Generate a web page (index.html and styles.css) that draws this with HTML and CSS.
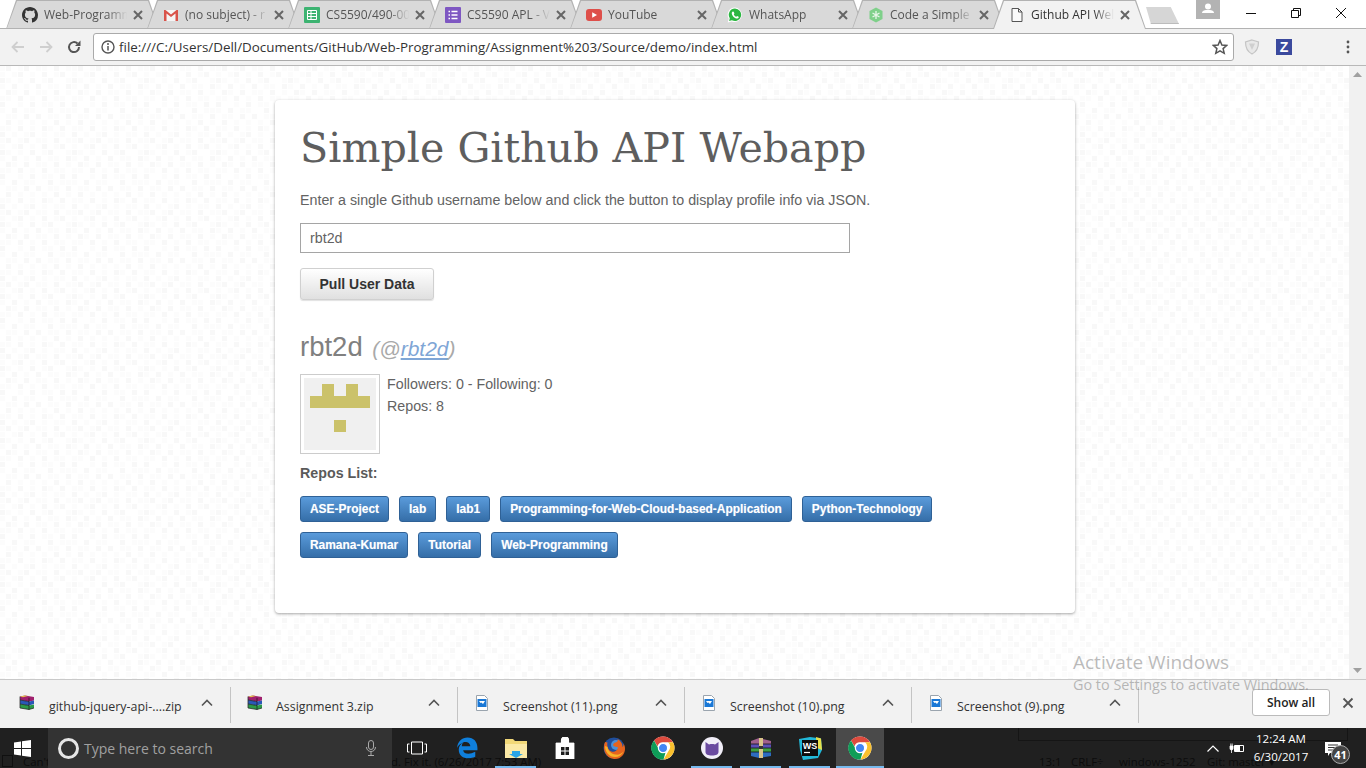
FILE: index.html
```html
<!DOCTYPE html>
<html lang="en">
<head>
<meta charset="utf-8">
<title>Github API Webapp</title>
<link rel="stylesheet" href="styles.css">
</head>
<body>
<svg class="defs" width="0" height="0" aria-hidden="true">
  <symbol id="chrome" viewBox="0 0 24 24">
    <circle cx="12" cy="12" r="11.500" fill="#fff"/>
    <path d="M12 .5a11.500 11.500 0 0 1 10 5.800H12a5.700 5.700 0 0 0-5.500 4L3 4.600A11.500 11.500 0 0 1 12 .5z" fill="#dd4b3e"/>
    <path d="M22 6.300A11.500 11.500 0 0 1 12.500 23.500l5-8.600a5.700 5.700 0 0 0-.5-8.600z" fill="#fbc02d"/>
    <path d="M12.500 23.500A11.500 11.500 0 0 1 3 4.600l5 8.800a5.700 5.700 0 0 0 6.500 3z" fill="#0f9d58"/>
    <circle cx="12" cy="12" r="4.600" fill="#4285f4" stroke="#fff" stroke-width="1.200"/>
  </symbol>
  <symbol id="rar" viewBox="0 0 16 16">
    <path d="M1 1.500 6 .5l9 1.500v3.500L10 6.500 1 5z" fill="#a0206e"/>
    <path d="M1 1.500 6 .5l3 .5-5 1.200z" fill="#e3c14a"/>
    <path d="M1 5l9 1.500 5-1V9l-5 1.500L1 9z" fill="#2a58b8"/>
    <path d="M1 9l9 1.500 5-1V13l-5 1.500L1 13z" fill="#2c9a48"/>
    <path d="M1 5l9 1.500M1 9l9 1.500M1 13l9 1.500 5-1.500M10 2.800v11.700" fill="none" stroke="#1a1a1a" stroke-width=".7"/>
    <path d="M1 1.500V13" stroke="#333" stroke-width=".8"/>
  </symbol>
  <symbol id="png" viewBox="0 0 12 16">
    <path d="M.5.5h8l3 3v12H.5z" fill="#fff" stroke="#9aa4ae"/>
    <rect x="1.500" y="4" width="9" height="8" fill="#1a78d6"/>
    <path d="M3 6h6L7 9 5.500 7.500 4.500 8z" fill="#fff"/>
  </symbol>
  <symbol id="x" viewBox="0 0 10 10">
    <path d="M1 1l8 8M9 1 1 9" stroke="#666" stroke-width="2" fill="none"/>
  </symbol>
  <symbol id="chevron" viewBox="0 0 12 8">
    <path d="M1 6.500 6 1.500l5 5" fill="none" stroke="#555" stroke-width="1.600"/>
  </symbol>
</svg>

<header class="tabstrip">
  <div class="tab">
    <svg class="fav" viewBox="0 0 16 16"><path fill="#333" d="M8 0C3.580 0 0 3.580 0 8c0 3.540 2.290 6.530 5.470 7.590.4.070.55-.17.55-.38 0-.19-.01-.82-.01-1.490-2.010.37-2.530-.49-2.690-.94-.09-.23-.48-.94-.82-1.130-.28-.15-.68-.52-.01-.53.63-.01 1.080.58 1.230.82.72 1.210 1.870.87 2.330.66.070-.52.28-.87.51-1.070-1.780-.2-3.640-.89-3.640-3.950 0-.87.31-1.590.82-2.150-.08-.2-.36-1.020.08-2.120 0 0 .67-.21 2.200.82.64-.18 1.320-.27 2-.27.68 0 1.360.09 2 .27 1.530-1.040 2.200-.82 2.200-.82.44 1.100.16 1.920.08 2.120.51.56.82 1.270.82 2.150 0 3.070-1.870 3.750-3.650 3.950.29.25.54.73.54 1.480 0 1.070-.01 1.930-.01 2.200 0 .21.15.46.55.38A8.013 8.013 0 0 0 16 8c0-4.420-3.580-8-8-8z"/></svg>
    <span class="tab-label">Web-Programm</span><svg class="tab-x"><use href="#x"/></svg>
  </div>
  <div class="tab">
    <svg class="fav" viewBox="0 0 16 16"><path d="M1 3h14v11H1z" fill="#f5f5f5"/><path d="M1 3v11h2.500V6.500L8 10l4.500-3.500V14H15V3h-1.500L8 7.500 2.500 3z" fill="#d9534a"/></svg>
    <span class="tab-label">(no subject) - r</span><svg class="tab-x"><use href="#x"/></svg>
  </div>
  <div class="tab">
    <svg class="fav" viewBox="0 0 16 16"><rect width="16" height="16" rx="1" fill="#3cb371"/><path d="M3.500 3.500h9v9h-9zM3.500 6.500h9M3.500 9.500h9M7 3.500v9" fill="none" stroke="#fff"/></svg>
    <span class="tab-label">CS5590/490-00</span><svg class="tab-x"><use href="#x"/></svg>
  </div>
  <div class="tab">
    <svg class="fav" viewBox="0 0 16 16"><rect width="16" height="16" rx="1" fill="#7e57c2"/><path d="M3.500 4.500h1.500M6.500 4.500h6M3.500 8h1.500M6.500 8h6M3.500 11.500h1.500M6.500 11.500h6" stroke="#fff" stroke-width="1.500"/></svg>
    <span class="tab-label">CS5590 APL - V</span><svg class="tab-x"><use href="#x"/></svg>
  </div>
  <div class="tab">
    <svg class="fav" viewBox="0 0 16 16"><rect y="2" width="16" height="12" rx="3" fill="#de4f4a"/><path d="M6.200 5.200v5.600L11 8z" fill="#fff"/></svg>
    <span class="tab-label">YouTube</span><svg class="tab-x"><use href="#x"/></svg>
  </div>
  <div class="tab">
    <svg class="fav" viewBox="0 0 16 16"><path d="M8 .5a7.300 7.300 0 0 0-6.200 11.200L.7 15.500l3.900-1A7.300 7.300 0 1 0 8 .5z" fill="#fff"/><path d="M8 1.600a6.200 6.200 0 0 0-5.200 9.600l-.7 2.700 2.800-.7A6.200 6.200 0 1 0 8 1.600z" fill="#2cb742"/><path d="M5.800 4.500c-.9.500-1.300 1.500-.8 2.900.7 1.800 2.200 3.400 4 4 1.200.4 2.300 0 2.700-1l-.1-.6-1.500-.8-.8.800c-1-.4-2-1.400-2.500-2.400l.6-.8-.7-1.800z" fill="#fff"/></svg>
    <span class="tab-label">WhatsApp</span><svg class="tab-x"><use href="#x"/></svg>
  </div>
  <div class="tab">
    <svg class="fav" viewBox="0 0 16 16"><path d="M8 .5 14.500 4v8L8 15.500 1.500 12V4z" fill="#7fd08a"/><path d="M8 4v8M4.500 6l7 4M11.500 6l-7 4" stroke="#e8f6ea" stroke-width="1.300"/></svg>
    <span class="tab-label">Code a Simple</span><svg class="tab-x"><use href="#x"/></svg>
  </div>
  <div class="tab tab-active">
    <svg class="fav" viewBox="0 0 16 16"><path d="M3 1.500h6.500l3.500 3.500v9.500H3zM9.500 1.500V5H13" fill="#fafafa" stroke="#555"/></svg>
    <span class="tab-label">Github API Wel</span><svg class="tab-x"><use href="#x"/></svg>
  </div>
  <div class="newtab"></div>
  <div class="strip-spacer"></div>
  <div class="profile">
    <svg viewBox="0 0 24 19" width="24" height="19"><circle cx="12" cy="6.500" r="3" fill="#fff"/><path d="M6 13c0-2.500 3-3 6-3s6 .5 6 3z" fill="#fff"/></svg>
  </div>
  <div class="winctl">
    <svg viewBox="0 0 12 12" width="12" height="12"><path d="M1 6.500h10" stroke="#111"/></svg>
  </div>
  <div class="winctl">
    <svg viewBox="0 0 12 12" width="12" height="12"><path d="M1.500 3.500h7v7h-7zM3.500 3.500v-2h7v7h-2" fill="none" stroke="#111"/></svg>
  </div>
  <div class="winctl">
    <svg viewBox="0 0 12 12" width="12" height="12"><path d="M1 1l10 10M11 1 1 11" stroke="#111" fill="none"/></svg>
  </div>
</header>

<nav class="toolbar">
  <svg class="navicon" viewBox="0 0 16 16"><path d="M14 8H3M7.500 3 2.500 8l5 5" fill="none" stroke="#cfcfcf" stroke-width="1.800"/></svg>
  <svg class="navicon" viewBox="0 0 16 16"><path d="M2 8h11M8.500 3l5 5-5 5" fill="none" stroke="#cfcfcf" stroke-width="1.800"/></svg>
  <svg class="navicon" viewBox="0 0 16 16"><path d="M13 8a5 5 0 1 1-1.500-3.500" fill="none" stroke="#555" stroke-width="2"/><path d="M14.500 1.500v5.500H9z" fill="#555"/></svg>
  <div class="omnibox">
    <svg class="info" viewBox="0 0 14 14"><circle cx="7" cy="7" r="6" fill="none" stroke="#555" stroke-width="1.400"/><path d="M7 6v4.500" stroke="#555" stroke-width="1.500"/><circle cx="7" cy="4" r="1" fill="#555"/></svg>
    <span class="url">file:///C:/Users/Dell/Documents/GitHub/Web-Programming/Assignment%203/Source/demo/index.html</span>
    <svg class="star" viewBox="0 0 16 16"><path d="M8 1.500 9.900 6l4.800.4-3.600 3.200 1.100 4.700L8 11.800l-4.200 2.500 1.100-4.700L1.300 6.400 6.100 6z" fill="none" stroke="#555" stroke-width="1.500"/></svg>
  </div>
  <svg class="ext-shield" viewBox="0 0 16 16"><path d="M8 1 14.500 3c0 6-1.500 9.500-6.500 12C3 12.500 1.500 9 1.500 3z" fill="#e8e8e8" stroke="#c4c4c4" stroke-width="1.200"/><path d="M5 4.500h6L8 11z" fill="#cfcfcf"/></svg>
  <span class="ext-z">Z</span>
  <svg class="menu-dots" viewBox="0 0 4 16"><circle cx="2" cy="3" r="1.400" fill="#555"/><circle cx="2" cy="8" r="1.400" fill="#555"/><circle cx="2" cy="13" r="1.400" fill="#555"/></svg>
</nav>

<main class="viewport">
  <section class="card">
    <h1 class="title">Simple Github API Webapp</h1>
    <p class="intro">Enter a single Github username below and click the button to display profile info via JSON.</p>
    <input class="username" type="text" value="rbt2d">
    <button class="pull" type="button">Pull User Data</button>
    <h2 class="name">rbt2d <span class="handle">(@<a href="#">rbt2d</a>)</span></h2>
    <div class="profile-row">
      <div class="avatar">
        <svg viewBox="0 0 72 72" width="72" height="72">
          <rect width="72" height="72" fill="#f0f0f0"/>
          <path d="M18 6h12v12h12V6h12v12h12v12H6V18h12z" fill="#cbc26a"/>
          <rect x="30" y="42" width="12" height="12" fill="#cbc26a"/>
        </svg>
      </div>
      <div class="stats">
        <div>Followers: 0 - Following: 0</div>
        <div>Repos: 8</div>
      </div>
    </div>
    <h3 class="repos-head">Repos List:</h3>
    <div class="repos">
      <a class="repo" href="#">ASE-Project</a>
      <a class="repo" href="#">lab</a>
      <a class="repo" href="#">lab1</a>
      <a class="repo" href="#">Programming-for-Web-Cloud-based-Application</a>
      <a class="repo" href="#">Python-Technology</a>
      <a class="repo" href="#">Ramana-Kumar</a>
      <a class="repo" href="#">Tutorial</a>
      <a class="repo" href="#">Web-Programming</a>
    </div>
  </section>
  <div class="scrollbar">
    <svg viewBox="0 0 9 5" width="9" height="5"><path d="M0 5 4.500 0 9 5z" fill="#a0a0a0"/></svg>
    <svg viewBox="0 0 9 5" width="9" height="5"><path d="M0 0 4.500 5 9 0z" fill="#a0a0a0"/></svg>
  </div>
</main>

<footer class="downloads">
  <div class="dl"><svg class="dl-icon" viewBox="0 0 16 16"><use href="#rar"/></svg><span class="dl-name">github-jquery-api-....zip</span><svg class="chev"><use href="#chevron"/></svg></div>
  <div class="dl"><svg class="dl-icon" viewBox="0 0 16 16"><use href="#rar"/></svg><span class="dl-name">Assignment 3.zip</span><svg class="chev"><use href="#chevron"/></svg></div>
  <div class="dl"><svg class="dl-icon" viewBox="0 0 12 16"><use href="#png"/></svg><span class="dl-name">Screenshot (11).png</span><svg class="chev"><use href="#chevron"/></svg></div>
  <div class="dl"><svg class="dl-icon" viewBox="0 0 12 16"><use href="#png"/></svg><span class="dl-name">Screenshot (10).png</span><svg class="chev"><use href="#chevron"/></svg></div>
  <div class="dl"><svg class="dl-icon" viewBox="0 0 12 16"><use href="#png"/></svg><span class="dl-name">Screenshot (9).png</span><svg class="chev"><use href="#chevron"/></svg></div>
  <div class="dl-spacer"></div>
  <button class="showall" type="button">Show all</button>
  <svg class="dl-close" viewBox="0 0 12 12"><path d="M1.500 1.500l9 9M10.500 1.500l-9 9" stroke="#555" stroke-width="1.800"/></svg>
</footer>

<div class="watermark">
  <div class="wm-big">Activate Windows</div>
  <div class="wm-small">Go to Settings to activate Windows.</div>
</div>

<footer class="taskbar">
  <div class="behind">
    <span class="b-panel"></span>
    <span class="b-check"></span>
    <span class="b-text b-can">Can't</span>
    <span class="b-text b-fix">d. Fix it. (6/26/2017 7:53 AM)</span>
    <span class="b-text b-pos">13:1</span>
    <span class="b-text b-crlf">CRLF÷</span>
    <span class="b-text b-enc">windows-1252</span>
    <span class="b-text b-git">Git: master ▾</span>
  </div>
  <div class="start">
    <svg viewBox="0 0 17 17" width="17" height="17"><path d="M0 2.400 7 1.400V8H0zM8 1.300 17 0v8H8zM0 9h7v6.600L0 14.600zM8 9h9v8L8 15.700z" fill="#fff"/></svg>
  </div>
  <div class="search">
    <span class="cortana"></span>
    <span class="search-text">Type here to search</span>
    <svg class="mic" viewBox="0 0 12 16"><rect x="3.500" y=".5" width="5" height="9" rx="2.500" fill="none" stroke="#aaa"/><path d="M1.500 7c0 6 9 6 9 0M6 12v3.500M3 15.500h6" fill="none" stroke="#aaa"/></svg>
  </div>
  <div class="tb-app tb-view">
    <svg viewBox="0 0 20 14" width="20" height="14"><path d="M4.500 1h11v12h-11zM2.500 3H.5v8h2M17.500 3h2v8h-2" fill="none" stroke="#fff"/></svg>
  </div>
  <div class="tb-app">
    <svg viewBox="0 0 20 20" width="22" height="22"><path d="M1 10C1.500 4 5.500.5 10.500.5c5.500 0 9 3.800 9 9.500v2H6.500c.5 3.500 5.500 4.500 11 1.500v4.500c-7 3-15 1-15-6.500 0-2.500 1.500-5 4-6.200-.8.900-1.200 1.900-1.300 3H13c0-4-6-5-8-2.300C3.500 6.500 2 8 1 10z" fill="#0f7fdc"/></svg>
  </div>
  <div class="tb-app tb-on">
    <svg viewBox="0 0 22 20" width="22" height="20"><path d="M0 1h8l2 2h12v17H0z" fill="#f2d878"/><path d="M0 6h22v14H0z" fill="#fbe9a6"/><path d="M7 13h8v3h3l-7 4-7-4h3z" fill="#2aa5e6"/></svg>
  </div>
  <div class="tb-app">
    <svg viewBox="0 0 20 22" width="20" height="22"><path d="M1 6h18v16H1zM6.500 6V3a3.500 3 0 0 1 7 0v3" fill="#fff" stroke="#fff" stroke-width=".8"/><path d="M6.500 6V3a3.500 3 0 0 1 7 0v3" fill="none" stroke="#fff" stroke-width="1.200"/><path d="M6 10h3.500v3.500H6zM10.500 10H14v3.500h-3.500zM6 14.500h3.500V18H6zM10.500 14.500H14V18h-3.500z" fill="#1d1d1d"/></svg>
  </div>
  <div class="tb-app">
    <svg viewBox="0 0 24 24" width="24" height="24"><circle cx="12" cy="12" r="10.500" fill="#1f4e9c"/><circle cx="14" cy="9" r="5" fill="#4a90d9"/><path d="M3 6c-3 7 .5 16 9 17 7 .5 11-5 11-10 0-2-.5-4-1.500-5.500.2 2-.3 3-1 3.500.2-3-2-6.500-5-8 1 2-.5 3-2 3.500-2 .5-3 2-2 3.500 1.500 1 3 .5 4.500 1.500-.5 3-3.500 5-6.500 4S4.500 10 5.500 6.500L3 6z" fill="#e5641e"/><path d="M3 10c0 6 4 11 10 11 4 0 7-2 8.500-5.500-2 2.500-5 3.500-8 3-4-.5-7.500-3.500-8-7.500L3 10z" fill="#f7b32b"/></svg>
  </div>
  <div class="tb-app"><svg viewBox="0 0 24 24" width="24" height="24"><use href="#chrome"/></svg></div>
  <div class="tb-app tb-on">
    <svg viewBox="0 0 24 24" width="24" height="24"><circle cx="12" cy="12" r="11" fill="#f1eef8"/><path d="M5.500 6 9 8.500c2-.6 4-.6 6 0L18.500 6v10c0 2.500-2.500 3.500-6.500 3.500S5.500 18.500 5.500 16z" fill="#6a4aa0"/></svg>
  </div>
  <div class="tb-app tb-on">
    <svg viewBox="0 0 24 20" width="24" height="20"><path d="M2 3 10 0l12 3v3H2z" fill="#a0608c"/><path d="M2 6h20v4H2z" fill="#5a4fb5"/><path d="M2 10h20v4H2z" fill="#3e9e42"/><path d="M2 14h20v4l-12 2-8-2z" fill="#2e6cc0"/><path d="M2 6h20M2 10h20M2 14h20" stroke="#111" stroke-width=".8"/><path d="M10 0h4v20h-4z" fill="#d9c48a"/><path d="M10 8h4v3h-4z" fill="#333"/></svg>
  </div>
  <div class="tb-app tb-on">
    <svg viewBox="0 0 24 24" width="24" height="24"><path d="M1 3 12 1l11 1.500L24 14l-4 8-15 2L2 14z" fill="#22b8d8"/><path d="M18 1l5 1.500L24 14l-5-2z" fill="#e9e04a"/><rect x="4" y="4" width="16" height="16" fill="#0d0d0d"/><text class="ws-text" x="12" y="12.500" text-anchor="middle">WS</text><path d="M6 16.500h6" stroke="#fff" stroke-width="1.200"/></svg>
  </div>
  <div class="tb-app tb-active"><svg viewBox="0 0 24 24" width="24" height="24"><use href="#chrome"/></svg></div>
  <div class="tb-spacer"></div>
  <svg class="tray-chev" viewBox="0 0 12 7"><path d="M.5 6.500 6 1l5.500 5.500" fill="none" stroke="#fff" stroke-width="1.200"/></svg>
  <svg class="tray-bat" viewBox="0 0 16 12"><path d="M5.500 3.500h9v6h-9z" fill="none" stroke="#fff"/><path d="M6 4h5v5H6z" fill="#fff"/><path d="M1 4v2.500a1.500 1.500 0 0 0 3 0V4zM1.800 1.500V4M3.200 1.500V4M2.500 8v3" stroke="#fff" fill="#fff" stroke-width=".8"/></svg>
  <div class="clock"><div>12:24 AM</div><div>6/30/2017</div></div>
  <div class="notify">
    <svg viewBox="0 0 16 15" width="16" height="15"><path d="M0 0h16v11H5l-2 3v-3H0z" fill="#fff"/><path d="M3 3h10M3 5.500h10M3 8h10" stroke="#333"/></svg>
    <span class="badge">41</span>
  </div>
</footer>
</body>
</html>
```

FILE: styles.css
```css
* { box-sizing: border-box; }
html, body { margin: 0; padding: 0; }
body {
  width: 1366px;
  height: 768px;
  overflow: hidden;
  display: flex;
  flex-direction: column;
  position: relative;
  font-family: "Liberation Sans", Arial, sans-serif;
  background: #fff;
}
.defs { position: absolute; }

/* tab strip */
.tabstrip {
  position: relative;
  height: 29px;
  flex: none;
  display: flex;
  align-items: flex-start;
  padding: 0 3px 0 6px;
  background: #fff;
  font-family: "Open Sans", "Noto Sans", sans-serif;
}
.tabstrip::after {
  content: "";
  position: absolute;
  left: 0;
  right: 0;
  bottom: 0;
  height: 1px;
  background: #b2b2b2;
  z-index: 1;
}
.tab {
  position: relative;
  flex: none;
  width: 153px;
  height: 29px;
  margin-right: -12px;
  padding-left: 16px;
  display: flex;
  align-items: center;
  gap: 6px;
  font-size: 12px;
  color: #555;
}
.tab::before, .tab::after {
  content: "";
  position: absolute;
  clip-path: polygon(0 100%, 10px 0, calc(100% - 10px) 0, 100% 100%);
}
.tab::before { inset: 0 0 0 0; background: #b2b2b2; }
.tab::after { inset: 1px 1px 1px 1px; background: #d9d9d9; }
.tab > * { position: relative; z-index: 1; }
.tab-active { z-index: 2; color: #333; }
.tab-active::after { background: #f2f2f2; inset: 1px 1px 0 1px; }
.fav { width: 16px; height: 16px; flex: none; }
.tab-label {
  width: 85px;
  flex: none;
  white-space: nowrap;
  -webkit-mask-image: linear-gradient(90deg, #000 74%, transparent 98%);
  mask-image: linear-gradient(90deg, #000 74%, transparent 98%);
}
.tab-x { width: 10px; height: 10px; flex: none; margin-left: -2px; }
.newtab {
  flex: none;
  width: 33px;
  height: 17px;
  margin: 7px 0 0 12px;
  background: #d6d6d6;
  border-bottom: 1px solid #bcbcbc;
  clip-path: polygon(0 0, 75% 0, 100% 100%, 15% 100%);
}
.strip-spacer { flex: 1; }
.profile { width: 24px; height: 19px; background: #b3b3b3; margin-right: 8px; flex: none; }
.winctl { width: 45px; height: 28px; display: flex; align-items: center; justify-content: center; flex: none; padding-bottom: 2px; }

/* toolbar */
.toolbar {
  height: 37px;
  flex: none;
  background: #f2f2f2;
  border-bottom: 1px solid #b8b8b8;
  display: flex;
  align-items: center;
  padding: 1px 0 1px 10px;
}
.navicon { width: 16px; height: 16px; margin-right: 12px; flex: none; }
.omnibox {
  width: 1141px;
  height: 28px;
  margin-left: -1px;
  background: #fff;
  border: 1px solid #aaa;
  border-radius: 3px;
  display: flex;
  align-items: center;
  padding: 0 5px 0 7px;
  font-family: "Open Sans", "Noto Sans", sans-serif;
  flex: none;
}
.info { width: 14px; height: 14px; flex: none; }
.url { font-size: 13.380px; color: #333; margin-left: 4px; white-space: nowrap; flex: 1; }
.star { width: 16px; height: 16px; flex: none; }
.ext-shield { width: 16px; height: 16px; margin-left: 10px; flex: none; }
.ext-z {
  width: 16px; height: 16px;
  margin-left: 16px;
  background: #3b4a9e;
  color: #fff;
  font: 700 14px/16px "Liberation Sans", sans-serif;
  text-align: center;
  flex: none;
}
.menu-dots { width: 4px; height: 16px; margin-left: 54px; flex: none; }

/* page */
.viewport {
  height: 613px;
  flex: none;
  display: flex;
  background-color: #fff;
  background-image: url("data:image/svg+xml,%3Csvg xmlns='http://www.w3.org/2000/svg' width='72' height='72'%3E%3Cpath fill='%23f8f8f8' d='M6 0h5v5H6zM24 0h5v5h-5zM54 0h5v5h-5zM18 6h5v5h-5zM42 6h5v5h-5zM60 6h5v5h-5zM0 12h5v5H0zM30 12h5v5h-5zM48 12h5v5h-5zM12 18h5v5h-5zM36 18h5v5h-5zM66 18h5v5h-5zM6 24h5v5H6zM24 24h5v5h-5zM54 24h5v5h-5zM18 30h5v5h-5zM42 30h5v5h-5zM0 36h5v5H0zM30 36h5v5h-5zM60 36h5v5h-5zM12 42h5v5h-5zM48 42h5v5h-5zM24 48h5v5h-5zM36 48h5v5h-5zM66 48h5v5h-5zM6 54h5v5H6zM54 54h5v5h-5zM18 60h5v5h-5zM42 60h5v5h-5zM60 60h5v5h-5zM0 66h5v5H0zM30 66h5v5h-5z'/%3E%3Cpath fill='%23fcfcfc' d='M0 0h5v5H0zM18 0h5v5h-5zM36 0h5v5h-5zM42 0h5v5h-5zM66 0h5v5h-5zM0 6h5v5H0zM12 6h5v5h-5zM30 6h5v5h-5zM54 6h5v5h-5zM6 12h5v5H6zM18 12h5v5h-5zM42 12h5v5h-5zM66 12h5v5h-5zM0 18h5v5H0zM24 18h5v5h-5zM48 18h5v5h-5zM54 18h5v5h-5zM12 24h5v5h-5zM36 24h5v5h-5zM42 24h5v5h-5zM66 24h5v5h-5zM0 30h5v5H0zM6 30h5v5H6zM30 30h5v5h-5zM54 30h5v5h-5zM60 30h5v5h-5zM18 36h5v5h-5zM42 36h5v5h-5zM48 36h5v5h-5zM0 42h5v5H0zM24 42h5v5h-5zM30 42h5v5h-5zM60 42h5v5h-5zM66 42h5v5h-5zM6 48h5v5H6zM12 48h5v5h-5zM48 48h5v5h-5zM54 48h5v5h-5zM18 54h5v5h-5zM30 54h5v5h-5zM42 54h5v5h-5zM66 54h5v5h-5zM0 60h5v5H0zM6 60h5v5H6zM30 60h5v5h-5zM48 60h5v5h-5zM12 66h5v5h-5zM24 66h5v5h-5zM42 66h5v5h-5zM54 66h5v5h-5zM60 66h5v5h-5z'/%3E%3C/svg%3E");
}
.card {
  width: 800px;
  height: 513px;
  margin: 34px 0 0 275px;
  padding: 0 25px;
  background: #fff;
  border-radius: 4px;
  box-shadow: 0 1px 3px rgba(0,0,0,.35);
  color: #636363;
  font-size: 14.250px;
  flex: none;
}
.title {
  margin: 23px 0 0;
  height: 50px;
  font: 400 41.200px/50px "DejaVu Serif", serif;
  color: #5e5e5e;
  white-space: nowrap;
}
.intro { margin: 17px 0 0; line-height: 20px; }
.username {
  display: block;
  width: 550px;
  height: 30px;
  margin-top: 13px;
  padding: 0 9px;
  border: 1px solid #a5a5a5;
  font: 14.250px "Liberation Sans", sans-serif;
  color: #636363;
  background: #fff;
}
.pull {
  display: block;
  width: 134px;
  height: 32px;
  margin-top: 15px;
  padding: 0;
  border: 1px solid #d0d0d0;
  border-radius: 3px;
  background: linear-gradient(#fff, #e0e0e0);
  box-shadow: 0 1px 1px rgba(0,0,0,.12);
  font: 700 14px "Liberation Sans", sans-serif;
  color: #333;
}
.name {
  margin: 30px 0 0;
  height: 33px;
  font-size: 27.500px;
  line-height: 33px;
  font-weight: 400;
  color: #808080;
}
.handle { font-size: 21px; font-style: italic; color: #a9a9a9; margin-left: 2px; }
.handle a { color: #7fa6d6; }
.profile-row { display: flex; margin-top: 11px; }
.avatar {
  width: 80px;
  height: 80px;
  padding: 3px;
  border: 1px solid #ccc;
  flex: none;
}
.avatar svg { display: block; }
.stats { margin-left: 7px; line-height: 22px; flex: none; margin-top: -1px; }
.repos-head { margin: 10px 0 0; font-size: 14.250px; line-height: 18px; font-weight: 700; color: #5a5a5a; }
.repos { display: flex; flex-wrap: wrap; gap: 10px; margin-top: 14px; width: 650px; }
.repo {
  height: 26px;
  padding: 0 9px;
  border: 1px solid #2f6196;
  border-radius: 3px;
  background: linear-gradient(#5a9bdb, #356ea8);
  color: #fff;
  font-size: 11.950px;
  font-weight: 700;
  line-height: 24px;
  text-decoration: none;
  white-space: nowrap;
  text-shadow: 0 0 1px rgba(255,255,255,.4);
}
.scrollbar {
  width: 17px;
  flex: none;
  margin-left: 274px;
  background: #f1f1f1;
  display: flex;
  flex-direction: column;
  justify-content: space-between;
  align-items: center;
  padding: 6px 0 6px;
}

/* downloads */
.downloads {
  height: 49px;
  flex: none;
  background: #f2f2f2;
  border-top: 1px solid #c9c9c9;
  padding-top: 1px;
  display: flex;
  align-items: center;
  font-family: "Open Sans", "Noto Sans", sans-serif;
  font-size: 12.400px;
  color: #333;
}
.dl {
  position: relative;
  width: 227px;
  height: 36px;
  flex: none;
  display: flex;
  align-items: center;
  padding-left: 16px;
  border-right: 1px solid #c4c4c4;
}
.dl:first-child { width: 231px; padding-left: 19px; }
.dl:first-child .dl-name { margin-left: 14px; }
.dl-icon { width: 16px; height: 16px; flex: none; margin-top: -4px; }
.dl-name { margin: 4px 0 0 13px; white-space: nowrap; flex: 1; }
.chev { width: 12px; height: 8px; margin-right: 17px; flex: none; margin-top: -4px; }
.dl-spacer { flex: 1; }
.showall {
  width: 78px;
  height: 27px;
  margin: -4px 7px 0 0;
  background: #fff;
  border: 1px solid #bbb;
  border-radius: 3px;
  font: 600 12px "Open Sans", sans-serif;
  color: #222;
  flex: none;
  padding: 0;
}
.dl-close { width: 12px; height: 12px; margin: -4px 12px 0 5px; flex: none; }

.watermark {
  position: absolute;
  left: 1073px;
  top: 649px;
  color: rgba(120,120,120,.5);
  font-family: "Open Sans", "Noto Sans", sans-serif;
  white-space: nowrap;
  z-index: 3;
}
.wm-big { font-size: 19px; line-height: 26px; }
.wm-small { font-size: 14.400px; line-height: 20px; }

/* taskbar */
.taskbar {
  position: relative;
  height: 40px;
  flex: none;
  background: #202020;
  display: flex;
  align-items: center;
  color: #fff;
  font-family: "Open Sans", "Noto Sans", sans-serif;
  overflow: hidden;
}
.behind {
  position: absolute;
  inset: 0;
  color: #0c0c0c;
  font-size: 11.400px;
  line-height: 13px;
  z-index: 1;
  pointer-events: none;
}
.b-panel { position: absolute; left: 1018px; top: -1px; width: 330px; height: 14px; border: 1px solid #151515; }
.b-check { position: absolute; left: 2px; top: 27px; width: 11px; height: 12px; border: 1px solid #101010; }
.b-text { position: absolute; top: 27px; white-space: nowrap; }
.b-can { left: 23px; }
.b-fix { left: 391px; }
.b-pos { left: 1039px; }
.b-crlf { left: 1071px; }
.b-enc { left: 1119px; }
.b-git { left: 1207px; }
.start { width: 48px; height: 40px; display: flex; align-items: center; justify-content: center; flex: none; padding-right: 3px; position: relative; z-index: 2; }
.search {
  width: 344px;
  height: 40px;
  background: #333;
  display: flex;
  align-items: center;
  padding-left: 10px;
  flex: none;
  position: relative;
  z-index: 2;
}
.cortana { width: 21px; height: 21px; border: 3px solid #e6e6e6; border-radius: 50%; flex: none; }
.search-text { margin-left: 5px; font-size: 14px; color: #a0a0a0; flex: 1; }
.mic { width: 12px; height: 16px; margin-right: 15px; flex: none; }
.tb-app {
  position: relative;
  width: 49px;
  height: 40px;
  flex: none;
  display: flex;
  align-items: center;
  justify-content: center;
  z-index: 2;
}
.tb-view { width: 50px; }
.tb-on::after {
  content: "";
  position: absolute;
  left: 4px;
  right: 4px;
  bottom: 0;
  height: 2px;
  background: #76b9ed;
}
.tb-active { background: #4a4a4a; width: 48px; margin-left: 2px; }
.tb-active::after {
  content: "";
  position: absolute;
  left: 0;
  right: 0;
  bottom: 0;
  height: 2px;
  background: #76b9ed;
}
.ws-text { font: 700 9px "Liberation Sans", sans-serif; fill: #fff; }
.tb-spacer { flex: 1; }
.tray-chev { width: 12px; height: 7px; margin-right: 10px; flex: none; position: relative; z-index: 2; }
.tray-bat { width: 16px; height: 12px; margin-right: -3px; flex: none; position: relative; z-index: 2; }
.clock { width: 78px; margin-right: 5px; text-align: center; font-size: 11.500px; line-height: 18px; flex: none; position: relative; z-index: 2; }
.notify { position: relative; width: 40px; height: 40px; flex: none; z-index: 2; margin-right: 1px; padding: 12px 0 0 0; }
.badge {
  position: absolute;
  left: 6px;
  top: 17px;
  width: 19px;
  height: 19px;
  border-radius: 50%;
  background: #444;
  border: 1px solid #aaa;
  font: 700 11px/17px "Open Sans", sans-serif;
  text-align: center;
  color: #fff;
}
```
